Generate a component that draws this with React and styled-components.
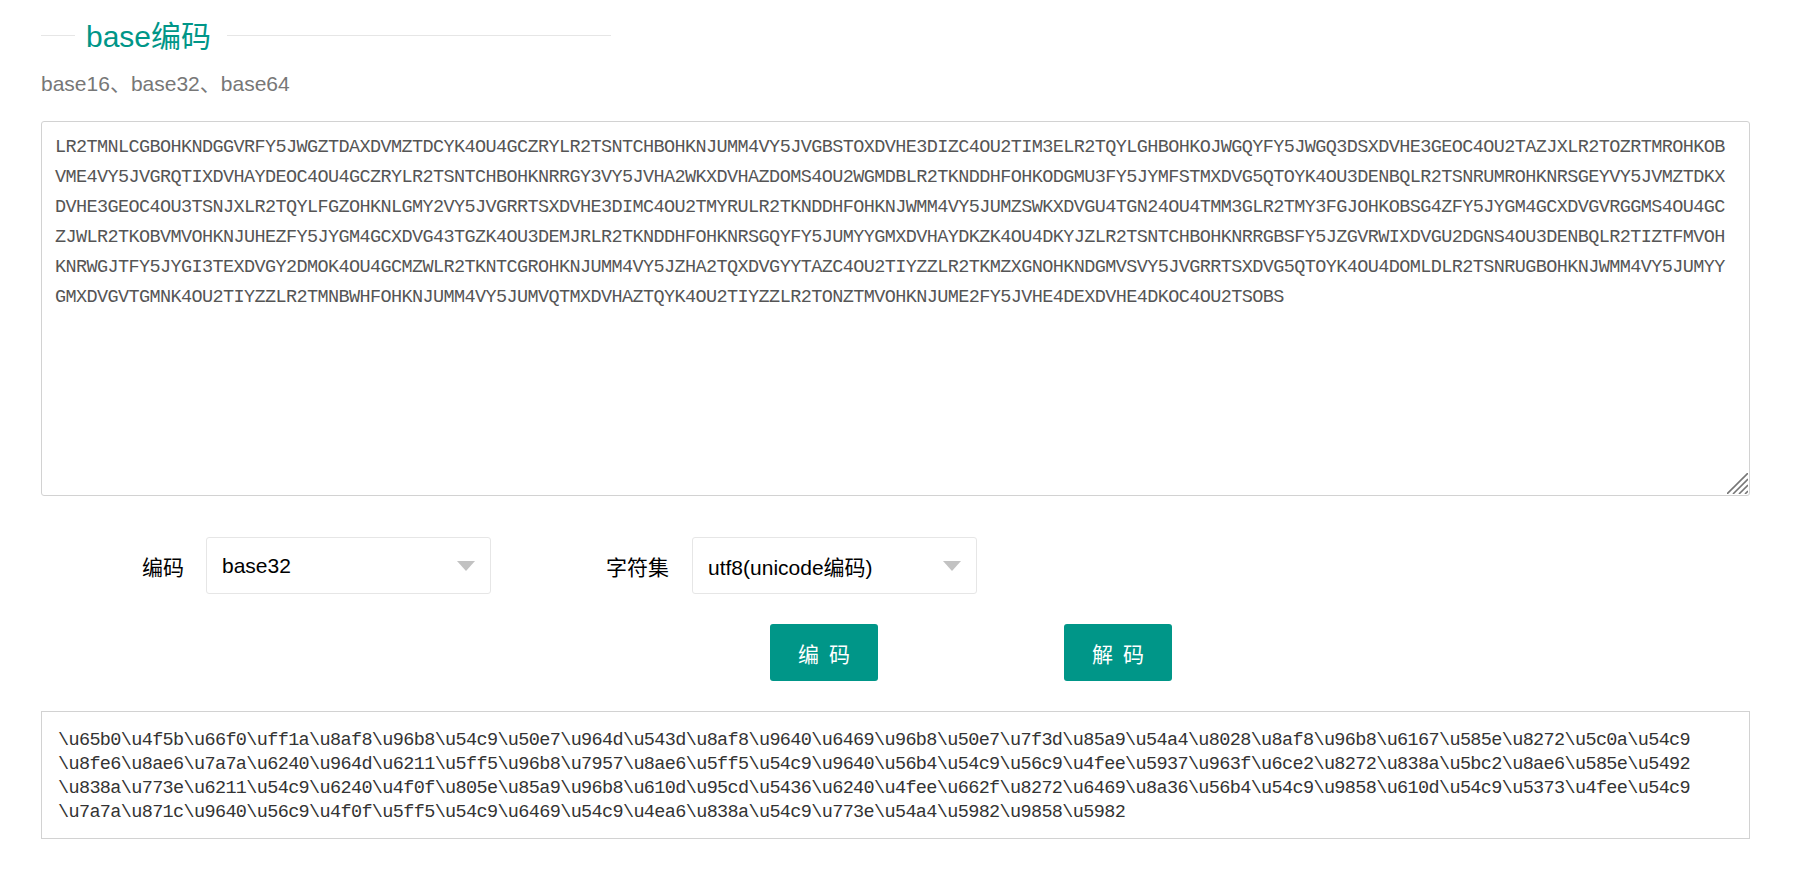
import React from 'react';
import styled, { createGlobalStyle } from 'styled-components';

const SANS = `'Liberation Sans', 'Noto Sans CJK SC', sans-serif`;
const MONO = `'Liberation Mono', 'Noto Sans CJK SC', monospace`;

const GlobalStyle = createGlobalStyle`
  html, body {
    margin: 0;
    padding: 0;
    background: #fff;
    font-family: ${SANS};
  }
`;

const Page = styled.div`
  width: 1709px;
  margin-left: 41px;
  padding-bottom: 56px;
`;

const TitleField = styled.fieldset`
  width: 570px;
  height: 14px;
  box-sizing: border-box;
  margin: 0;
  padding: 0;
  border: none;
  border-top: 1px solid #e6e6e6;
  margin-top: 15px;
`;

const Title = styled.legend`
  margin-left: 34px;
  padding: 4px 16px 0 11px;
  font-size: 30px;
  line-height: 36px;
  color: #009688;
`;

const Subtitle = styled.p`
  margin: 14px 0 0;
  font-size: 21px;
  line-height: 30px;
  color: #777;
`;

const SourceWrap = styled.div`
  position: relative;
  margin-top: 22px;
`;

const Source = styled.textarea`
  display: block;
  box-sizing: border-box;
  width: 1709px;
  height: 375px;
  margin: 0;
  padding: 11px 13px;
  border: 1px solid #d2d2d2;
  border-radius: 3px;
  outline: none;
  resize: none;
  background: #fff;
  color: #555;
  font-family: ${MONO};
  font-size: 18.5px;
  letter-spacing: -0.6px;
  line-height: 30px;
  white-space: pre;
  overflow: hidden;
`;

const Grip = styled.svg`
  position: absolute;
  right: 2px;
  bottom: 2px;
  width: 21px;
  height: 21px;
`;

const FormRow = styled.div`
  display: flex;
  align-items: center;
  margin-top: 41px;
  padding-left: 101px;
`;

const FieldLabel = styled.label`
  width: ${(p) => p.$width}px;
  margin-left: ${(p) => p.$offset}px;
  font-size: 21px;
  color: #000;
  white-space: nowrap;
`;

const SelectBox = styled.div`
  display: flex;
  align-items: center;
  justify-content: space-between;
  box-sizing: border-box;
  width: 285px;
  height: 57px;
  padding: 0 15px;
  border: 1px solid #e6e6e6;
  border-radius: 3px;
  background: #fff;
  font-size: 21px;
  color: #000;
`;

const Caret = styled.span`
  width: 0;
  height: 0;
  border-left: 9px solid transparent;
  border-right: 9px solid transparent;
  border-top: 10px solid #c2c2c2;
`;

const ButtonRow = styled.div`
  display: flex;
  gap: 186px;
  margin-top: 30px;
  padding-left: 729px;
`;

const ActionButton = styled.button`
  width: 108px;
  height: 57px;
  padding: 0;
  border: none;
  border-radius: 3px;
  background: #009688;
  color: #fff;
  font-family: ${SANS};
  font-size: 21px;
  letter-spacing: 10px;
  text-indent: 10px;
`;

const Output = styled.div`
  box-sizing: border-box;
  width: 1709px;
  height: 128px;
  margin-top: 30px;
  padding: 17px 16px;
  border: 1px solid #d2d2d2;
  color: #333;
  font-family: ${MONO};
  font-size: 18.5px;
  letter-spacing: -0.64px;
  line-height: 24px;
`;

const OutputLine = styled.div`
  white-space: pre;
`;

const encoded = [
  'LR2TMNLCGBOHKNDGGVRFY5JWGZTDAXDVMZTDCYK4OU4GCZRYLR2TSNTCHBOHKNJUMM4VY5JVGBSTOXDVHE3DIZC4OU2TIM3ELR2TQYLGHBOHKOJWGQYFY5JWGQ3DSXDVHE3GEOC4OU2TAZJXLR2TOZRTMROHKOB',
  'VME4VY5JVGRQTIXDVHAYDEOC4OU4GCZRYLR2TSNTCHBOHKNRRGY3VY5JVHA2WKXDVHAZDOMS4OU2WGMDBLR2TKNDDHFOHKODGMU3FY5JYMFSTMXDVG5QTOYK4OU3DENBQLR2TSNRUMROHKNRSGEYVY5JVMZTDKX',
  'DVHE3GEOC4OU3TSNJXLR2TQYLFGZOHKNLGMY2VY5JVGRRTSXDVHE3DIMC4OU2TMYRULR2TKNDDHFOHKNJWMM4VY5JUMZSWKXDVGU4TGN24OU4TMM3GLR2TMY3FGJOHKOBSG4ZFY5JYGM4GCXDVGVRGGMS4OU4GC',
  'ZJWLR2TKOBVMVOHKNJUHEZFY5JYGM4GCXDVG43TGZK4OU3DEMJRLR2TKNDDHFOHKNRSGQYFY5JUMYYGMXDVHAYDKZK4OU4DKYJZLR2TSNTCHBOHKNRRGBSFY5JZGVRWIXDVGU2DGNS4OU3DENBQLR2TIZTFMVOH',
  'KNRWGJTFY5JYGI3TEXDVGY2DMOK4OU4GCMZWLR2TKNTCGROHKNJUMM4VY5JZHA2TQXDVGYYTAZC4OU2TIYZZLR2TKMZXGNOHKNDGMVSVY5JVGRRTSXDVG5QTOYK4OU4DOMLDLR2TSNRUGBOHKNJWMM4VY5JUMYY',
  'GMXDVGVTGMNK4OU2TIYZZLR2TMNBWHFOHKNJUMM4VY5JUMVQTMXDVHAZTQYK4OU2TIYZZLR2TONZTMVOHKNJUME2FY5JVHE4DEXDVHE4DKOC4OU2TSOBS',
].join('\n');

const decoded = [
  '\\u65b0\\u4f5b\\u66f0\\uff1a\\u8af8\\u96b8\\u54c9\\u50e7\\u964d\\u543d\\u8af8\\u9640\\u6469\\u96b8\\u50e7\\u7f3d\\u85a9\\u54a4\\u8028\\u8af8\\u96b8\\u6167\\u585e\\u8272\\u5c0a\\u54c9',
  '\\u8fe6\\u8ae6\\u7a7a\\u6240\\u964d\\u6211\\u5ff5\\u96b8\\u7957\\u8ae6\\u5ff5\\u54c9\\u9640\\u56b4\\u54c9\\u56c9\\u4fee\\u5937\\u963f\\u6ce2\\u8272\\u838a\\u5bc2\\u8ae6\\u585e\\u5492',
  '\\u838a\\u773e\\u6211\\u54c9\\u6240\\u4f0f\\u805e\\u85a9\\u96b8\\u610d\\u95cd\\u5436\\u6240\\u4fee\\u662f\\u8272\\u6469\\u8a36\\u56b4\\u54c9\\u9858\\u610d\\u54c9\\u5373\\u4fee\\u54c9',
  '\\u7a7a\\u871c\\u9640\\u56c9\\u4f0f\\u5ff5\\u54c9\\u6469\\u54c9\\u4ea6\\u838a\\u54c9\\u773e\\u54a4\\u5982\\u9858\\u5982',
];

const App = () => (
  <Page>
    <GlobalStyle />
    <TitleField>
      <Title>base编码</Title>
    </TitleField>
    <Subtitle>base16、base32、base64</Subtitle>
    <SourceWrap>
      <Source defaultValue={encoded} spellCheck={false} />
      <Grip viewBox="0 0 21 21">
        <g stroke="#777" strokeWidth="1.6">
          <line x1="0" y1="21" x2="21" y2="0" />
          <line x1="6" y1="21" x2="21" y2="6" />
          <line x1="12" y1="21" x2="21" y2="12" />
          <line x1="18" y1="21" x2="21" y2="18" />
        </g>
      </Grip>
    </SourceWrap>
    <FormRow>
      <FieldLabel $width={64} $offset={0}>编码</FieldLabel>
      <SelectBox>
        base32
        <Caret />
      </SelectBox>
      <FieldLabel $width={86} $offset={115}>字符集</FieldLabel>
      <SelectBox>
        utf8(unicode编码)
        <Caret />
      </SelectBox>
    </FormRow>
    <ButtonRow>
      <ActionButton>编码</ActionButton>
      <ActionButton>解码</ActionButton>
    </ButtonRow>
    <Output>
      {decoded.map((line) => (
        <OutputLine key={line}>{line}</OutputLine>
      ))}
    </Output>
  </Page>
);

export default App;
